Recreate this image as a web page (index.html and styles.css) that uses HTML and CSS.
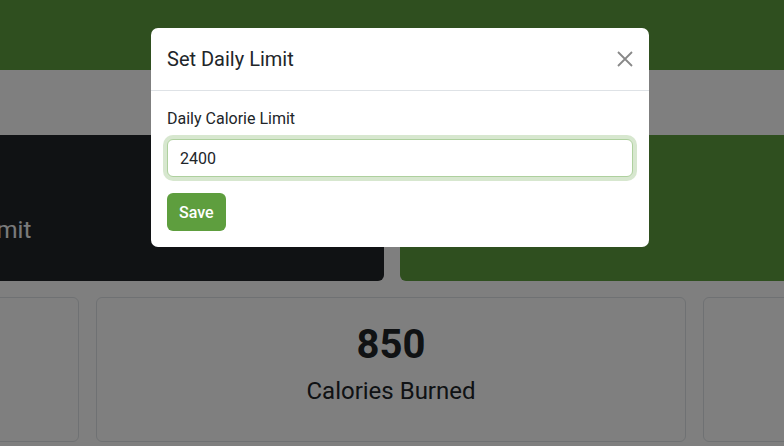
FILE: index.html
```html
<!DOCTYPE html>
<html lang="en">
<head>
<meta charset="utf-8">
<title>Calorie Tracker</title>
<link rel="stylesheet" href="styles.css">
</head>
<body>
<header class="topbar"></header>
<main class="page">
  <section class="summary-row">
    <div class="summary dark">
      <div class="summary-label">Daily Limit</div>
    </div>
    <div class="summary green"></div>
  </section>
  <section class="stats-row">
    <div class="stat"></div>
    <div class="stat"><div class="stat-value">850</div><div class="stat-label">Calories Burned</div></div>
    <div class="stat"></div>
  </section>
</main>

<div class="backdrop"></div>
<div class="modal">
  <div class="modal-header">
    <h5 class="modal-title">Set Daily Limit</h5>
    <button class="btn-close" aria-label="Close">
      <svg width="16" height="16" viewBox="0 0 16 16"><path d="M1 1L15 15M15 1L1 15" stroke="#888" stroke-width="1.8" fill="none"/></svg>
    </button>
  </div>
  <div class="modal-body">
    <label class="form-label" for="limit">Daily Calorie Limit</label>
    <input class="form-control" id="limit" type="number" value="2400">
    <button class="btn-save">Save</button>
  </div>
</div>
</body>
</html>
```

FILE: styles.css
```css
* { box-sizing: border-box; }
html, body { margin: 0; padding: 0; }
body {
  font-family: Roboto, "Liberation Sans", Arial, sans-serif;
  color: #212529;
  background: #fff;
  width: 784px;
  height: 446px;
  overflow: hidden;
}
.topbar {
  height: 70px;
  background: #5e9e3e;
}
.page {
  padding-top: 65px;
}
.summary-row {
  display: flex;
  gap: 16px;
  margin-left: -200px;
  margin-right: -20px;
}
.summary {
  height: 146px;
  border-radius: 6px;
}
.summary.dark {
  width: 584px;
  background: #212529;
  padding: 81px 0 0 120px;
}
.summary.green {
  flex: 1;
  background: #5e9e3e;
}
.summary-label {
  font-size: 24px;
  line-height: 28px;
  color: #f4f5f6;
}
.stats-row {
  display: flex;
  gap: 17px;
  margin-left: -511px;
  margin-top: 16px;
}
.stat {
  flex: 0 0 590px;
  height: 145px;
  border: 1px solid #dee2e6;
  border-radius: 6px;
  padding-top: 23px;
  text-align: center;
}
.stat-value {
  font-size: 40px;
  font-weight: 700;
  line-height: 48px;
  margin-bottom: 8px;
}
.stat-label {
  font-size: 24px;
  line-height: 29px;
}
.backdrop {
  position: fixed;
  inset: 0;
  background: rgba(0, 0, 0, 0.5);
}
.modal {
  position: fixed;
  top: 28px;
  left: 151px;
  width: 498px;
  background: #fff;
  border-radius: 7px;
}
.modal-header {
  display: flex;
  align-items: center;
  justify-content: space-between;
  padding: 16px;
  border-bottom: 1px solid #dee2e6;
}
.modal-title {
  margin: 0;
  font-size: 20px;
  font-weight: 400;
  line-height: 30px;
}
.btn-close {
  border: 0;
  background: none;
  padding: 0;
  width: 16px;
  height: 16px;
  display: flex;
}
.modal-body {
  padding: 16px;
}
.form-label {
  display: block;
  font-size: 16px;
  line-height: 24px;
  margin-bottom: 8px;
}
.form-control {
  display: block;
  width: 100%;
  height: 38px;
  padding: 6px 12px;
  font-family: inherit;
  font-size: 16px;
  color: #212529;
  border: 1px solid #aed09e;
  border-radius: 6px;
  box-shadow: 0 0 0 4px rgba(94, 158, 62, 0.25);
  outline: none;
  -moz-appearance: textfield;
}
.form-control::-webkit-inner-spin-button,
.form-control::-webkit-outer-spin-button { -webkit-appearance: none; margin: 0; }
.btn-save {
  margin-top: 16px;
  height: 38px;
  padding: 0 12px;
  border: 0;
  border-radius: 6px;
  background: #5e9e3e;
  color: #fff;
  font-family: inherit;
  font-size: 16px;
  font-weight: 500;
}
```
